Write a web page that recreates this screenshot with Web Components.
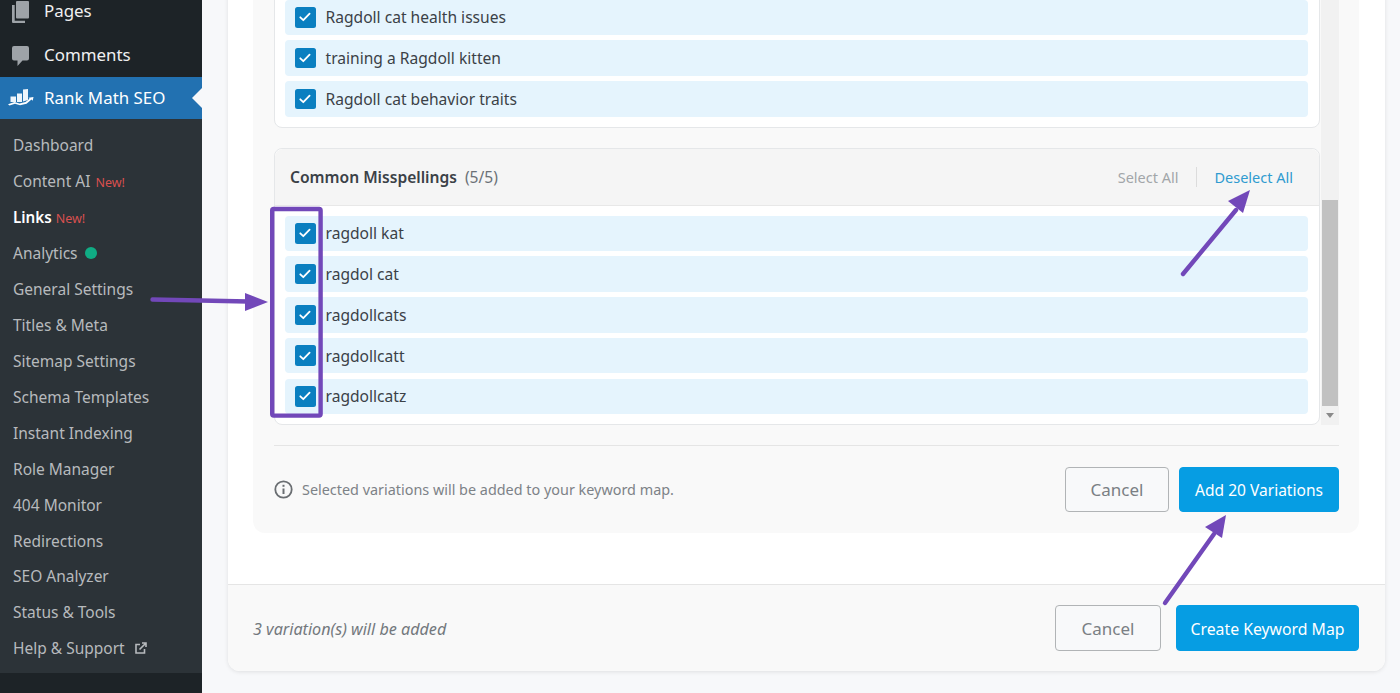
<!DOCTYPE html>
<html>
<head>
<meta charset="utf-8">
<style>
  html, body { margin: 0; height: 693px; overflow: hidden; background: #f7f8fa; }
  body { font-family: "Noto Sans", "Open Sans", sans-serif; }
  .page { display: flex; height: 693px; position: relative; }
</style>
</head>
<body>
<div class="page">
  <wp-sidebar>
    <side-top label="Pages" icon="pages"></side-top>
    <side-top label="Comments" icon="comments"></side-top>
    <side-top label="Rank Math SEO" icon="rankmath" active></side-top>
    <side-sub slot="sub">Dashboard</side-sub>
    <side-sub slot="sub" badge="New!">Content AI</side-sub>
    <side-sub slot="sub" badge="New!" current>Links</side-sub>
    <side-sub slot="sub" dot>Analytics</side-sub>
    <side-sub slot="sub">General Settings</side-sub>
    <side-sub slot="sub">Titles &amp; Meta</side-sub>
    <side-sub slot="sub">Sitemap Settings</side-sub>
    <side-sub slot="sub">Schema Templates</side-sub>
    <side-sub slot="sub">Instant Indexing</side-sub>
    <side-sub slot="sub">Role Manager</side-sub>
    <side-sub slot="sub">404 Monitor</side-sub>
    <side-sub slot="sub">Redirections</side-sub>
    <side-sub slot="sub">SEO Analyzer</side-sub>
    <side-sub slot="sub">Status &amp; Tools</side-sub>
    <side-sub slot="sub" external>Help &amp; Support</side-sub>
  </wp-sidebar>

  <km-dialog>
    <km-group>
      <km-row>Ragdoll cat health issues</km-row>
      <km-row>training a Ragdoll kitten</km-row>
      <km-row>Ragdoll cat behavior traits</km-row>
    </km-group>
    <km-group title="Common Misspellings" count="(5/5)">
      <km-row>ragdoll kat</km-row>
      <km-row>ragdol cat</km-row>
      <km-row>ragdollcats</km-row>
      <km-row>ragdollcatt</km-row>
      <km-row>ragdollcatz</km-row>
    </km-group>
  </km-dialog>

  <km-annotations></km-annotations>
</div>

<script>
// sidebar shell
class WpSidebar extends HTMLElement {
  constructor(){
    super();
    this.attachShadow({mode: 'open'});
    this.shadowRoot.innerHTML = `
    <style>
      :host {
        display: flex;
        flex-direction: column;
        justify-content: flex-end;
        flex: 0 0 202px;
        height: 693px;
        overflow: hidden;
        background: #1d2327;
      }
      .sub {
        display: flex;
        flex-direction: column;
        background: #2c3338;
        padding: 8px 0 7px;
        margin-bottom: 20px;
      }
    </style>
    <slot></slot>
    <div class="sub"><slot name="sub"></slot></div>
    `;
  }
}
customElements.define('wp-sidebar', WpSidebar);

const sideIcons = {
  pages: `<svg width="17" height="23" viewBox="0 0 17 23"><path fill="#9ea3a8" d="M5 0h11a1 1 0 0 1 1 1v15.500a1 1 0 0 1-1 1H5a1 1 0 0 1-1-1V1a1 1 0 0 1 1-1z"/><path fill="#9ea3a8" d="M0 4h2.700v15.800H13V22H1a1 1 0 0 1-1-1z"/></svg>`,
  comments: `<svg width="17" height="20" viewBox="0 0 17 20"><path fill="#9ea3a8" d="M2 0h13a2 2 0 0 1 2 2v10.500a2 2 0 0 1-2 2h-4.500L5.500 20v-5.500H2a2 2 0 0 1-2-2V2a2 2 0 0 1 2-2z"/></svg>`,
  rankmath: `<svg width="26" height="18" viewBox="0 0 26 18"><path fill="#eef5fb" d="M2.500 7.500H8V13H2.500zM9 4.500h5V13H9zM15 .500L20 0v11l-5 1.500z"/><path fill="#fff" d="M0 15.200L6.500 13l5 1.500 6-1.500 4-3.300-1-.9 5-.8-.8 3.800-1.200-1.200-5 4.200-6.500 1.500-5-1.500-5.500 1.600z"/></svg>`
};

class SideTop extends HTMLElement {
  constructor(){
    super();
    this.attachShadow({mode: 'open'});
  }
  connectedCallback(){
    const active = this.hasAttribute('active');
    const down = this.getAttribute('icon') === 'pages' ? 5 : this.getAttribute('icon') === 'comments' ? 4 : 0;
    this.shadowRoot.innerHTML = `
    <style>
      :host {
        display: flex;
        flex: 0 0 auto;
        align-items: center;
        box-sizing: border-box;
        height: ${active ? 42 : 44}px;
        padding-bottom: ${active ? 0 : 2}px;
        position: relative;
        font-size: 16.900px;
        background: ${active ? '#2271b1' : 'transparent'};
        color: ${active ? '#fff' : '#f0f0f1'};
      }
      .icon { flex: 0 0 44px; display: flex; align-items: center; box-sizing: border-box; padding-left: ${active ? 8 : 12}px; }
      .icon svg { display: block; margin-top: ${down}px; }
      .label { padding-bottom: ${active ? 1 : 0}px; }
      .notch {
        position: absolute; right: 0; top: 50%; margin-top: -10px;
        border: 10px solid transparent; border-right-color: #f7f8fa; border-left: 0;
      }
    </style>
    <span class="icon">${sideIcons[this.getAttribute('icon')]}</span>
    <span class="label">${this.getAttribute('label')}</span>
    ${active ? '<span class="notch"></span>' : ''}
    `;
  }
}
customElements.define('side-top', SideTop);

class SideSub extends HTMLElement {
  constructor(){
    super();
    this.attachShadow({mode: 'open'});
  }
  connectedCallback(){
    const badge = this.getAttribute('badge');
    const current = this.hasAttribute('current');
    this.shadowRoot.innerHTML = `
    <style>
      :host {
        display: flex;
        align-items: center;
        box-sizing: border-box;
        height: 35.930px;
        padding: 0.600px 0 0 13px;
        font-size: ${current ? 15.2 : 15.5}px;
        color: ${current ? '#fff' : '#b7babd'};
        font-weight: ${current ? 600 : 400};
      }
      .new { color: #d9504f; font-size: 12.500px; font-weight: 400; margin-left: ${current ? 4 : 5}px; padding-top: 2px; }
      .dot { width: 12px; height: 12px; border-radius: 50%; background: #10ac84; margin-left: 7px; }
      svg { margin-left: 10px; }
    </style>
    <slot></slot>
    ${badge ? `<span class="new">${badge}</span>` : ''}
    ${this.hasAttribute('dot') ? '<span class="dot"></span>' : ''}
    ${this.hasAttribute('external') ? `<svg width="12" height="12" viewBox="0 0 12 12" fill="none" stroke="#b7babd" stroke-width="1.600"><path d="M5 2.500H1v8.500h8.500V7"/><path d="M4.500 7.500L10.500 1.500M7 1h4v4"/></svg>` : ''}
    `;
  }
}
customElements.define('side-sub', SideSub);

// one selected variation
class KmRow extends HTMLElement {
  constructor(){
    super();
    this.attachShadow({mode: 'open'});
    this.shadowRoot.innerHTML = `
    <style>
      :host {
        display: flex;
        align-items: center;
        height: 35.500px;
        background: #e5f4fd;
        border-radius: 4px;
        padding-left: 10px;
        font-size: 15.600px;
        color: #3b4147;
      }
      .box {
        width: 20.500px; height: 20.500px;
        border-radius: 2.500px;
        background: #0a7fc0;
        display: flex; align-items: center; justify-content: center;
        margin-right: 10px;
      }
    </style>
    <span class="box"><svg width="12" height="10" viewBox="0 0 12 10" fill="none" stroke="#fff" stroke-width="1.800" stroke-linecap="round" stroke-linejoin="round"><path d="M1.300 5.300l3 2.900 6.300-6.600"/></svg></span>
    <slot></slot>
    `;
  }
}
customElements.define('km-row', KmRow);

// group of rows, with optional header
class KmGroup extends HTMLElement {
  constructor(){
    super();
    this.attachShadow({mode: 'open'});
  }
  connectedCallback(){
    const title = this.getAttribute('title');
    this.removeAttribute('title');
    this.shadowRoot.innerHTML = `
    <style>
      :host {
        display: block;
        background: #fff;
        border: 1px solid #e5e7e9;
        border-radius: 8px;
        box-sizing: border-box;
      }
      .head {
        display: flex; align-items: center;
        height: 56px;
        padding: 0 26px 0 15px;
        background: #f5f5f5;
        border-bottom: 1px solid #e8e8e8;
        border-radius: 8px 8px 0 0;
        font-size: 15.600px;
        color: #3b4147;
      }
      .head b { font-weight: 600; }
      .count { color: #6b7177; margin-left: 8px; }
      .acts { margin-left: auto; display: flex; align-items: center; font-size: 14.500px; }
      .sel { color: #a2a6a9; }
      .sep { width: 1px; height: 20px; background: #dcdcdc; margin: 0 17px 0 18px; }
      .desel { color: #2f9bd0; }
      .rows { display: flex; flex-direction: column; gap: 5.250px; padding: 10px 11px 10px 10px; }
    </style>
    ${title ? `<div class="head"><b>${title}</b><span class="count">${this.getAttribute('count')}</span>
      <span class="acts"><span class="sel">Select All</span><span class="sep"></span><span class="desel">Deselect All</span></span></div>` : ''}
    <div class="rows"><slot></slot></div>
    `;
  }
}
customElements.define('km-group', KmGroup);

class KmButton extends HTMLElement {
  constructor(){
    super();
    this.attachShadow({mode: 'open'});
  }
  connectedCallback(){
    const primary = this.hasAttribute('primary');
    this.shadowRoot.innerHTML = `
    <style>
      :host {
        display: flex; align-items: center; justify-content: center;
        box-sizing: border-box;
        height: 46px;
        padding-top: ${primary ? 1 : 0}px;
        border-radius: 4px;
        font-size: 17px;
        background: ${primary ? '#069de3' : '#f8f9fa'};
        color: ${primary ? '#fff' : '#7a7f84'};
        border: 1px solid ${primary ? '#069de3' : '#b1b4b6'};
      }
    </style>
    <slot></slot>
    `;
  }
}
customElements.define('km-button', KmButton);

// the dialog is anchored on its bottom edge, the top runs off the screen
class KmDialog extends HTMLElement {
  constructor(){
    super();
    this.attachShadow({mode: 'open'});
    this.shadowRoot.innerHTML = `
    <style>
      :host {
        display: flex;
        flex-direction: column;
        justify-content: flex-end;
        flex: 1;
        height: 693px;
        overflow: hidden;
        padding: 0 15px 22px 26px;
        box-sizing: border-box;
      }
      .card {
        flex: 0 0 auto;
        background: #fff;
        border-radius: 0 0 12px 12px;
        box-shadow: 0 1px 4px rgba(0,0,0,.1);
        overflow: hidden;
      }
      .panel {
        background: #f9f9f9;
        border-radius: 0 0 12px 12px;
        margin: 0 26px 51px 25px;
        padding: 0 20px 21px 21px;
      }
      .scroll { display: flex; align-items: stretch; }
      .groups { flex: 1; display: flex; flex-direction: column; gap: 20px; min-width: 0; margin-right: 1px; }
      .bar {
        flex: 0 0 18px;
        background: #f1f1f1;
        display: flex; flex-direction: column;
        justify-content: flex-end;
        align-items: center;
      }
      .thumb { width: 16px; height: 206px; background: #c1c1c1; margin-bottom: 3px; }
      .tri { width: 0; height: 0; border: 4.500px solid transparent; border-top: 5px solid #8a8a8a; border-bottom: 0; margin: 4px 0 7px; }
      .actions {
        display: flex; align-items: center;
        margin-top: 20px; border-top: 1px solid #e5e5e5;
        padding-top: 20.500px;
      }
      .actions km-button { height: 45.500px; }
      .note { display: flex; align-items: center; gap: 9px; font-size: 14.400px; color: #7d8287; flex: 1; }
      .foot {
        display: flex; align-items: center;
        background: #f9f9f9;
        border-top: 1px solid #e5e5e5;
        padding: 20px 26px 20px 25px;
      }
      .count { flex: 1; font-style: italic; font-size: 16.150px; color: #73787d; padding-top: 1px; }
    </style>
    <div class="card">
      <div class="panel">
        <div class="scroll">
          <div class="groups"><slot></slot></div>
          <div class="bar"><div class="thumb"></div><div class="tri"></div></div>
        </div>
        <div class="actions">
          <span class="note">
            <svg width="19" height="19" viewBox="0 0 19 19" fill="none" stroke="#6a6e72" stroke-width="1.800"><circle cx="9.500" cy="9.500" r="8.200"/><path d="M9.500 8.500v5.500" stroke-width="2"/><path d="M9.500 4.800v2" stroke-width="2"/></svg>
            Selected variations will be added to your keyword map.
          </span>
          <km-button style="width:104px;margin-right:10px">Cancel</km-button>
          <km-button primary style="width:160px;font-size:15.550px">Add 20 Variations</km-button>
        </div>
      </div>
      <div class="foot">
        <span class="count">3 variation(s) will be added</span>
        <km-button style="width:106px;margin-right:15px">Cancel</km-button>
        <km-button primary style="width:183px;font-size:15.800px">Create Keyword Map</km-button>
      </div>
    </div>
    `;
  }
}
customElements.define('km-dialog', KmDialog);

// purple marks drawn over the screenshot
class KmAnnotations extends HTMLElement {
  constructor(){
    super();
    this.attachShadow({mode: 'open'});
    this.shadowRoot.innerHTML = `
    <style>
      :host { position: absolute; left: 0; top: 0; width: 1400px; height: 693px; pointer-events: none; }
      svg { display: block; }
    </style>
    <svg width="1400" height="693" viewBox="0 0 1400 693">
      <rect x="272.200" y="209" width="48.400" height="206.600" rx="1.500" fill="none" stroke="#7248b9" stroke-width="4.400"/>
      <g stroke="#7248b9" stroke-width="4.400" stroke-linecap="round" fill="none">
        <path d="M152.500 299.500L248 301.500"/>
        <path d="M1183 274L1236 210"/>
        <path d="M1165 603L1214 534"/>
      </g>
      <g fill="#7248b9">
        <path d="M245 293L268 302L245 311z"/>
        <path d="M1228 201L1250 190L1243 213z"/>
        <path d="M1205 527L1226 515L1222 538z"/>
      </g>
    </svg>
    `;
  }
}
customElements.define('km-annotations', KmAnnotations);
</script>
</body>
</html>
